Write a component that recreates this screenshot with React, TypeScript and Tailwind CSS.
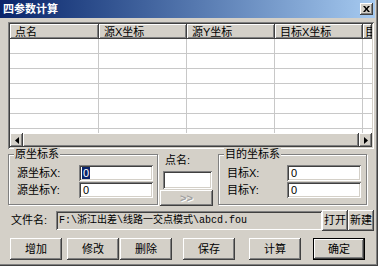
import React from "react";

const raised =
  "shadow-[inset_-1px_-1px_#404040,inset_1px_1px_#ffffff,inset_-2px_-2px_#808080,inset_2px_2px_#d4d0c8]";
const sunken =
  "shadow-[inset_1px_1px_#808080,inset_-1px_-1px_#ffffff,inset_2px_2px_#404040,inset_-2px_-2px_#d4d0c8]";

function Edit({ value, w, h, selected }: { value: string; w: string; h: string; selected?: boolean }) {
  return (
    <div className={`${w} ${h} bg-white ${sunken} flex items-center pl-[3px] text-[11px] leading-[12px] text-black`}>
      {selected ? <span className="bg-[#0a246a] text-white px-[1px]">{value}</span> : <span className="px-[1px]">{value}</span>}
    </div>
  );
}

function Btn({ label, className = "" }: { label: string; className?: string }) {
  return (
    <div className={`h-[22px] w-[52px] bg-[#d4d0c8] ${raised} flex items-center justify-center text-[11px] text-black ${className}`}>
      {label}
    </div>
  );
}

function Group({ title, className, children }: { title: string; className: string; children: React.ReactNode }) {
  return (
    <div className={`relative border border-[#808080] shadow-[inset_1px_1px_#ffffff,1px_1px_#ffffff] ${className}`}>
      <span className="absolute -top-[8px] left-[5px] px-[1px] bg-[#d4d0c8] text-[11px] leading-[14px] text-black">{title}</span>
      {children}
    </div>
  );
}

export default function App() {
  const cols = [
    { t: "点名", w: "w-[89px]" },
    { t: "源X坐标", w: "w-[88px]" },
    { t: "源Y坐标", w: "w-[88px]" },
    { t: "目标X坐标", w: "w-[88px]" },
    { t: "目", w: "w-[9px]" },
  ];
  const rows = [0, 1, 2, 3, 4, 5, 6];
  return (
    <div className="w-[378px] h-[266px] bg-[#d4d0c8] overflow-hidden font-['Liberation_Sans','Noto_Sans_CJK_SC',sans-serif] shadow-[inset_-1px_-1px_#404040,inset_-2px_-2px_#808080] flex flex-col">
      {/* title bar */}
      <div className="w-[375px] h-[18px] shrink-0 flex items-center bg-gradient-to-r from-[#0a246a] to-[#a6caf0]">
        <span className="pl-[3px] text-white font-bold text-[11px] leading-[14px]">四参数计算</span>
        <div className={`ml-auto mr-[2px] w-[13px] h-[12px] bg-[#d4d0c8] ${raised} flex items-center justify-center`}>
          <svg width="7" height="6" viewBox="0 0 7 6">
            <path d="M0 0h2l1.5 2L5 0h2L4.5 3 7 6H5L3.5 4 2 6H0l2.5-3z" fill="#000" />
          </svg>
        </div>
      </div>

      {/* list view */}
      <div className={`mt-[4px] ml-[8px] w-[366px] h-[127px] shrink-0 bg-white ${sunken} p-[2px] flex flex-col`}>
        <div className="flex h-[15px] shrink-0 overflow-hidden">
          {cols.map((c) => (
            <div key={c.t} className={`${c.w} shrink-0 h-[15px] bg-[#d4d0c8] ${raised} flex items-center ${c.t === "目" ? "pl-[2px]" : "pl-[5px]"} text-[11px] leading-[12px] text-black whitespace-nowrap overflow-hidden`}>
              {c.t}
            </div>
          ))}
        </div>
        <div className="flex-1 overflow-hidden">
          {rows.map((r) => (
            <div key={r} className="flex h-[15px] border-b border-[#c8c8c8] overflow-hidden">
              <div className="w-[89px] shrink-0 border-r border-[#c8c8c8]" />
              <div className="w-[88px] shrink-0 border-r border-[#c8c8c8]" />
              <div className="w-[88px] shrink-0 border-r border-[#c8c8c8]" />
              <div className="w-[88px] shrink-0 border-r border-[#c8c8c8]" />
              <div className="w-[9px] shrink-0" />
            </div>
          ))}
        </div>
        <div className="h-[14px] shrink-0 flex bg-[#e8e6e2]">
          <div className={`w-[13px] h-[14px] bg-[#d4d0c8] ${raised} flex items-center justify-center`}>
            <svg width="4" height="7" viewBox="0 0 4 7"><path d="M4 0v7L0 3.5z" fill="#000" /></svg>
          </div>
          <div className={`flex-1 h-[14px] bg-[#d4d0c8] ${raised}`} />
          <div className={`w-[13px] h-[14px] bg-[#d4d0c8] ${raised} flex items-center justify-center`}>
            <svg width="4" height="7" viewBox="0 0 4 7"><path d="M0 0v7l4-3.5z" fill="#000" /></svg>
          </div>
        </div>
      </div>

      {/* coordinate groups */}
      <div className="mt-[5px] ml-[8px] flex items-start shrink-0">
        <Group title="原坐标系" className="w-[150px] h-[51px] pt-[10px] pl-[8px] flex flex-col gap-[1px]">
          <div className="flex items-center h-[16px]">
            <span className="w-[62px] text-[11px] text-black">源坐标X:</span>
            <Edit value="0" w="w-[74px]" h="h-[16px]" selected />
          </div>
          <div className="flex items-center h-[16px]">
            <span className="w-[62px] text-[11px] text-black">源坐标Y:</span>
            <Edit value="0" w="w-[74px]" h="h-[16px]" />
          </div>
        </Group>

        <div className="ml-[2px] w-[54px] flex flex-col -mt-[1px]">
          <span className="ml-[5px] h-[14px] text-[11px] leading-[14px] text-black">点名:</span>
          <div className="mt-[4px] ml-[3px]">
            <Edit value="" w="w-[49px]" h="h-[18px]" />
          </div>
          <div className={`mt-[1px] w-[53px] h-[16px] bg-[#d4d0c8] ${raised} flex items-center justify-center text-[11px] font-bold text-[#a0a0a0] [text-shadow:1px_1px_0_#ffffff]`}>
            &gt;&gt;
          </div>
        </div>

        <Group title="目的坐标系" className="ml-[4px] w-[149px] h-[51px] pt-[10px] pl-[8px] flex flex-col gap-[1px]">
          <div className="flex items-center h-[16px]">
            <span className="w-[60px] text-[11px] text-black">目标X:</span>
            <Edit value="0" w="w-[74px]" h="h-[16px]" />
          </div>
          <div className="flex items-center h-[16px]">
            <span className="w-[60px] text-[11px] text-black">目标Y:</span>
            <Edit value="0" w="w-[74px]" h="h-[16px]" />
          </div>
        </Group>
      </div>

      {/* file row */}
      <div className="mt-[4px] ml-[11px] flex items-center h-[21px] shrink-0">
        <span className="w-[45px] text-[11px] text-black">文件名:</span>
        <div className={`w-[266px] h-[19px] bg-[#d4d0c8] ${sunken} flex items-center pl-[3px] text-[10px] text-black font-['Liberation_Mono','Noto_Sans_CJK_SC',monospace] whitespace-nowrap overflow-hidden`}>
          F:\浙江出差\线路一交点模式\abcd.fou
        </div>
        <div className={`w-[26px] h-[21px] bg-[#d4d0c8] ${raised} flex items-center justify-center text-[11px] text-black`}>打开</div>
        <div className={`w-[26px] h-[21px] bg-[#d4d0c8] ${raised} flex items-center justify-center text-[11px] text-black`}>新建</div>
      </div>

      {/* bottom buttons */}
      <div className="mt-[7px] ml-[10px] flex items-center shrink-0">
        <Btn label="增加" />
        <Btn label="修改" className="ml-[5px]" />
        <Btn label="删除" className="ml-[1px]" />
        <Btn label="保存" className="ml-[11px]" />
        <Btn label="计算" className="ml-[14px]" />
        <div className="ml-[12px] w-[52px] h-[22px] border border-black">
          <div className={`w-full h-full bg-[#d4d0c8] ${raised} flex items-center justify-center text-[11px] text-black`}>确定</div>
        </div>
      </div>
    </div>
  );
}
